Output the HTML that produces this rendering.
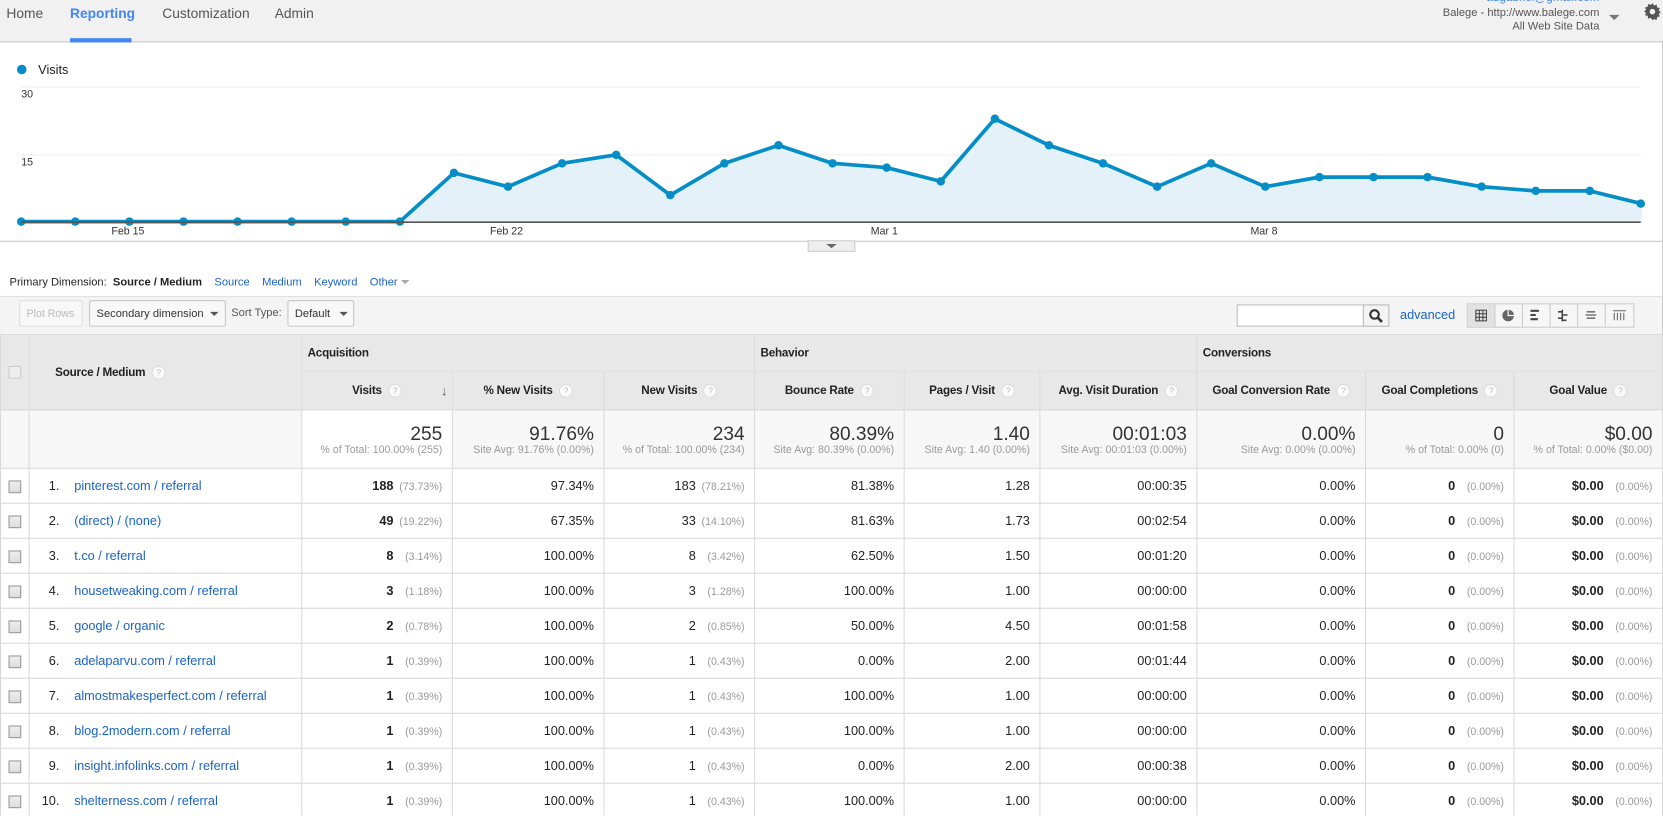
<!DOCTYPE html>
<html><head><meta charset="utf-8"><style>
html,body{margin:0;padding:0;width:1663px;height:815px;overflow:hidden;background:#fff;font-family:"Liberation Sans",Arial,sans-serif}
#w{position:absolute;left:0;top:0;width:1568px;height:769px;transform:scale(1.0606);transform-origin:0 0;overflow:hidden}
.a{position:absolute}
.nav{left:0;top:0;width:1568px;height:39px;background:#f1f1f1;border-bottom:1px solid #c8c8c8}
.tab{top:5px;font-size:13px;color:#555}
.blue{color:#1a63c6}
table{position:absolute;left:0;top:315px;border-collapse:collapse;table-layout:fixed;width:1567px;font-size:12px}
td,th{border:1px solid #d9d9d9;padding:0 8px;white-space:nowrap;overflow:hidden}
th{background:#e8e8e8;font-size:11px;color:#222;font-weight:bold;letter-spacing:-0.2px}
.h1 th{height:34px;text-align:left;padding-left:5px;vertical-align:middle}
.h2 th{height:35px;text-align:center}
.q{display:inline-block;width:11px;height:11px;border-radius:50%;border:1px solid #ddd;background:#fafafa;color:#bbb;font-size:8px;line-height:11px;text-align:center;vertical-align:middle;margin-left:6px;font-weight:normal}
.sum td{background:#f7f7f7;height:54px;text-align:right;vertical-align:middle;padding-right:9px}
.sum td.s{background:#fff}
.big{font-size:18px;color:#333;line-height:20px}
.sm{font-size:10px;color:#999}
.r td{height:32px;text-align:right;color:#222;padding-right:9px}
.r td.l{text-align:left;padding-left:8px}
.r td.c{padding:0;text-align:center}
.g{font-size:10px;color:#999;display:inline-block;width:46px;text-align:right}
.cb{display:inline-block;width:10px;height:10px;border:1px solid #999;background:linear-gradient(#eee,#ddd);vertical-align:middle}
.num{display:inline-block;width:20px;text-align:right;margin-right:14px}
.lnk{color:#1a63c6}
.btn{top:283px;height:25px;border:1px solid #c6c6c6;border-radius:2px;background:#f8f8f8;font-size:11px;color:#333;line-height:25px;box-sizing:border-box;padding:0 6px;white-space:nowrap;overflow:hidden}
.tri{display:inline-block;width:0;height:0;border-left:4px solid transparent;border-right:4px solid transparent;border-top:4px solid #555;vertical-align:middle}
</style></head><body><div id="w">
<div class="a nav"></div>
<div class="a tab" style="left:6px">Home</div>
<div class="a tab" style="left:66px;color:#4285f4;font-weight:bold">Reporting</div>
<div class="a" style="left:66px;top:36px;width:58px;height:4px;background:#4285f4"></div>
<div class="a tab" style="left:153px">Customization</div>
<div class="a tab" style="left:259px">Admin</div>
<div class="a" style="right:60px;top:-8px;font-size:11px;color:#4285f4;text-align:right">adgabriel@gmail.com</div>
<div class="a" style="right:60px;top:6px;font-size:10.5px;color:#555;text-align:right">Balege - http://www.balege.com</div>
<div class="a" style="right:60px;top:19px;font-size:10.5px;color:#555;text-align:right">All Web Site Data</div>
<div class="a" style="left:1517px;top:8px"><span class="tri" style="border-top-color:#777;border-left-width:5px;border-right-width:5px;border-top-width:5px"></span></div>
<svg class="a" style="left:1550px;top:3px" width="16" height="16" viewBox="0 0 16 16"><path d="M8 0l1.5 2.2 2.6-.8.3 2.6 2.6.6-1 2.4 2 1.6-2 1.6 1 2.4-2.6.6-.3 2.6-2.6-.8L8 16l-1.5-2.2-2.6.8-.3-2.6-2.6-.6 1-2.4L0 8l2-1.6-1-2.4 2.6-.6.3-2.6 2.6.8z" fill="#555"/><circle cx="8" cy="8" r="2.6" fill="#f1f1f1"/></svg>
<div class="a" style="left:1567px;top:40px;width:1px;height:275px;background:#ccc"></div>

<div class="a" style="left:16px;top:61px;width:9px;height:9px;border-radius:50%;background:#058dc7"></div>
<div class="a" style="left:36px;top:59px;font-size:12px;color:#222">Visits</div>
<div class="a" style="left:20px;top:84px;font-size:10px;color:#333">30</div>
<div class="a" style="left:20px;top:148px;font-size:10px;color:#333">15</div>
<svg class="a" style="left:0;top:0" width="1568" height="240">
<line x1="20" y1="82" x2="1547" y2="82" stroke="#eee"/>
<line x1="20" y1="146" x2="1547" y2="146" stroke="#eee"/>
<polygon fill="#e4f1f9" points="20,209 20,209 71,209 122,209 173,209 224,209 275,209 326,209 377,209 428,163 479,176 530,154 581,146 632,184 683,154 734,137 785,154 836,158 887,171 938,112 989,137 1040,154 1091,176 1142,154 1193,176 1244,167 1295,167 1346,167 1397,176 1448,180 1499,180 1548,192 1548,209"/>
<polyline fill="none" stroke="#058dc7" stroke-width="3.5" stroke-linejoin="round" points="20,209 71,209 122,209 173,209 224,209 275,209 326,209 377,209 428,163 479,176 530,154 581,146 632,184 683,154 734,137 785,154 836,158 887,171 938,112 989,137 1040,154 1091,176 1142,154 1193,176 1244,167 1295,167 1346,167 1397,176 1448,180 1499,180 1548,192"/>
<g fill="#058dc7">
<circle cx="20" cy="209" r="4"/><circle cx="71" cy="209" r="4"/><circle cx="122" cy="209" r="4"/><circle cx="173" cy="209" r="4"/><circle cx="224" cy="209" r="4"/><circle cx="275" cy="209" r="4"/><circle cx="326" cy="209" r="4"/><circle cx="377" cy="209" r="4"/><circle cx="428" cy="163" r="4"/><circle cx="479" cy="176" r="4"/><circle cx="530" cy="154" r="4"/><circle cx="581" cy="146" r="4"/><circle cx="632" cy="184" r="4"/><circle cx="683" cy="154" r="4"/><circle cx="734" cy="137" r="4"/><circle cx="785" cy="154" r="4"/><circle cx="836" cy="158" r="4"/><circle cx="887" cy="171" r="4"/><circle cx="938" cy="112" r="4"/><circle cx="989" cy="137" r="4"/><circle cx="1040" cy="154" r="4"/><circle cx="1091" cy="176" r="4"/><circle cx="1142" cy="154" r="4"/><circle cx="1193" cy="176" r="4"/><circle cx="1244" cy="167" r="4"/><circle cx="1295" cy="167" r="4"/><circle cx="1346" cy="167" r="4"/><circle cx="1397" cy="176" r="4"/><circle cx="1448" cy="180" r="4"/><circle cx="1499" cy="180" r="4"/><circle cx="1547" cy="192" r="4"/></g>
<line x1="20" y1="209.5" x2="1547" y2="209.5" stroke="#555" stroke-width="1.5"/>
<line x1="0" y1="227.5" x2="1567" y2="227.5" stroke="#ccc"/>
<rect x="762" y="227" width="44" height="10" fill="#eee" stroke="#ccc"/>
<polygon points="779,230 789,230 784,234" fill="#666"/>
</svg>
<div class="a" style="left:105px;top:213px;font-size:10px;color:#333">Feb 15</div>
<div class="a" style="left:462px;top:213px;font-size:10px;color:#333">Feb 22</div>
<div class="a" style="left:821px;top:213px;font-size:10px;color:#333">Mar 1</div>
<div class="a" style="left:1179px;top:213px;font-size:10px;color:#333">Mar 8</div>

<div class="a" style="left:9px;top:260px;font-size:10.5px;color:#222;white-space:nowrap">Primary Dimension:&nbsp; <span style="font-weight:bold;color:#222;">Source / Medium</span> &nbsp;&nbsp;&nbsp;<span class="blue">Source</span> &nbsp;&nbsp;&nbsp;<span class="blue">Medium</span> &nbsp;&nbsp;&nbsp;<span class="blue">Keyword</span> &nbsp;&nbsp;&nbsp;<span class="blue">Other</span> <span class="tri" style="border-top-color:#aaa"></span></div>
<div class="a" style="left:0;top:279px;width:1567px;height:36px;background:#f4f4f4;border-top:1px solid #e0e0e0"></div>
<div class="a btn" style="left:18px;width:60px;color:#bbb;border-color:#ddd;font-size:10px">Plot Rows</div>
<div class="a btn" style="left:84px;width:129px;font-size:10.5px">Secondary dimension &nbsp;<span class="tri"></span></div>
<div class="a" style="left:218px;top:283px;font-size:10.5px;color:#555;line-height:25px">Sort Type:</div>
<div class="a btn" style="left:271px;width:63px;font-size:10.5px">Default &nbsp;&nbsp;<span class="tri"></span></div>
<div class="a" style="left:1166px;top:287px;width:143px;height:21px;border:1px solid #bbb;background:#fff;box-sizing:border-box"></div>
<div class="a" style="left:1285px;top:287px;width:25px;height:21px;border:1px solid #bbb;background:#f4f4f4;box-sizing:border-box"><svg width="23" height="19"><circle cx="10" cy="8.5" r="4" fill="none" stroke="#333" stroke-width="2"/><line x1="13" y1="11.5" x2="17" y2="15.5" stroke="#333" stroke-width="2.5"/></svg></div>
<div class="a" style="left:1320px;top:290px;font-size:12px;color:#1a63c6">advanced</div>
<div class="a" style="left:1383px;top:286px;width:158px;height:23px;border:1px solid #ccc;background:#f6f6f6;box-sizing:border-box"></div>
<div class="a" style="left:1384px;top:287px;width:26px;height:21px;background:#e2e2e2"></div>
<svg class="a" style="left:1383px;top:286px" width="160" height="24" fill="none" stroke="#444">
<line x1="26.5" y1="1" x2="26.5" y2="22" stroke="#ccc"/><line x1="52.5" y1="1" x2="52.5" y2="22" stroke="#ccc"/><line x1="78.5" y1="1" x2="78.5" y2="22" stroke="#ccc"/><line x1="104.5" y1="1" x2="104.5" y2="22" stroke="#ccc"/><line x1="130.5" y1="1" x2="130.5" y2="22" stroke="#ccc"/>
<rect x="8.5" y="6.5" width="10" height="10"/><path d="M8.5 9.8h10M8.5 13.2h10M11.8 6.5v10M15.2 6.5v10"/>
<circle cx="39" cy="11.5" r="5.5" fill="#666" stroke="none"/><path d="M39 6v5.5h5.5" stroke="#f6f6f6" stroke-width="1.2"/>
<path d="M60 7h8M60 11h5M60 15h7" stroke-width="2"/>
<path d="M90 6v11M86 8h4M90 11h5M86 14h4M90 16h4" stroke-width="1.5"/>
<path d="M113 8h8M112 11h10M113 14h8" stroke-width="1.5" stroke="#777"/>
<path d="M138 7h12M139 9v7M142 9v7M145 9v7M148 9v7" stroke="#666"/>
</svg>

<table>
<colgroup><col style="width:27px"><col style="width:257px"><col style="width:142px"><col style="width:143px"><col style="width:142px"><col style="width:141px"><col style="width:128px"><col style="width:148px"><col style="width:159px"><col style="width:140px"><col style="width:140px"></colgroup>
<tr class="h1"><th rowspan="2" style="padding:0;text-align:center"><span class="cb" style="border-color:#ccc;background:#eee"></span></th><th rowspan="2" style="text-align:left;padding-left:24px">Source / Medium<span class="q">?</span></th><th colspan="3">Acquisition</th><th colspan="3">Behavior</th><th colspan="3">Conversions</th></tr>
<tr class="h2"><th style="position:relative">Visits<span class="q">?</span><span style="position:absolute;right:4px;top:10px;font-size:13px;color:#666">&#8595;</span></th><th>% New Visits<span class="q">?</span></th><th>New Visits<span class="q">?</span></th><th>Bounce Rate<span class="q">?</span></th><th>Pages / Visit<span class="q">?</span></th><th>Avg. Visit Duration<span class="q">?</span></th><th>Goal Conversion Rate<span class="q">?</span></th><th>Goal Completions<span class="q">?</span></th><th>Goal Value<span class="q">?</span></th></tr>
<tr class="sum"><td></td><td></td>
<td class="s"><div class="big">255</div><div class="sm">% of Total: 100.00% (255)</div></td>
<td><div class="big">91.76%</div><div class="sm">Site Avg: 91.76% (0.00%)</div></td>
<td><div class="big">234</div><div class="sm">% of Total: 100.00% (234)</div></td>
<td><div class="big">80.39%</div><div class="sm">Site Avg: 80.39% (0.00%)</div></td>
<td><div class="big">1.40</div><div class="sm">Site Avg: 1.40 (0.00%)</div></td>
<td><div class="big">00:01:03</div><div class="sm">Site Avg: 00:01:03 (0.00%)</div></td>
<td><div class="big">0.00%</div><div class="sm">Site Avg: 0.00% (0.00%)</div></td>
<td><div class="big">0</div><div class="sm">% of Total: 0.00% (0)</div></td>
<td><div class="big">$0.00</div><div class="sm">% of Total: 0.00% ($0.00)</div></td></tr>
<tr class="r"><td class="c"><span class="cb"></span></td><td class="l"><span class="num">1.</span><span class="lnk">pinterest.com / referral</span></td><td><b>188</b><span class="g">(73.73%)</span></td><td>97.34%</td><td>183<span class="g">(78.21%)</span></td><td>81.38%</td><td>1.28</td><td>00:00:35</td><td>0.00%</td><td><b>0</b><span class="g">(0.00%)</span></td><td><b>$0.00</b><span class="g">(0.00%)</span></td></tr>
<tr class="r"><td class="c"><span class="cb"></span></td><td class="l"><span class="num">2.</span><span class="lnk">(direct) / (none)</span></td><td><b>49</b><span class="g">(19.22%)</span></td><td>67.35%</td><td>33<span class="g">(14.10%)</span></td><td>81.63%</td><td>1.73</td><td>00:02:54</td><td>0.00%</td><td><b>0</b><span class="g">(0.00%)</span></td><td><b>$0.00</b><span class="g">(0.00%)</span></td></tr>
<tr class="r"><td class="c"><span class="cb"></span></td><td class="l"><span class="num">3.</span><span class="lnk">t.co / referral</span></td><td><b>8</b><span class="g">(3.14%)</span></td><td>100.00%</td><td>8<span class="g">(3.42%)</span></td><td>62.50%</td><td>1.50</td><td>00:01:20</td><td>0.00%</td><td><b>0</b><span class="g">(0.00%)</span></td><td><b>$0.00</b><span class="g">(0.00%)</span></td></tr>
<tr class="r"><td class="c"><span class="cb"></span></td><td class="l"><span class="num">4.</span><span class="lnk">housetweaking.com / referral</span></td><td><b>3</b><span class="g">(1.18%)</span></td><td>100.00%</td><td>3<span class="g">(1.28%)</span></td><td>100.00%</td><td>1.00</td><td>00:00:00</td><td>0.00%</td><td><b>0</b><span class="g">(0.00%)</span></td><td><b>$0.00</b><span class="g">(0.00%)</span></td></tr>
<tr class="r"><td class="c"><span class="cb"></span></td><td class="l"><span class="num">5.</span><span class="lnk">google / organic</span></td><td><b>2</b><span class="g">(0.78%)</span></td><td>100.00%</td><td>2<span class="g">(0.85%)</span></td><td>50.00%</td><td>4.50</td><td>00:01:58</td><td>0.00%</td><td><b>0</b><span class="g">(0.00%)</span></td><td><b>$0.00</b><span class="g">(0.00%)</span></td></tr>
<tr class="r"><td class="c"><span class="cb"></span></td><td class="l"><span class="num">6.</span><span class="lnk">adelaparvu.com / referral</span></td><td><b>1</b><span class="g">(0.39%)</span></td><td>100.00%</td><td>1<span class="g">(0.43%)</span></td><td>0.00%</td><td>2.00</td><td>00:01:44</td><td>0.00%</td><td><b>0</b><span class="g">(0.00%)</span></td><td><b>$0.00</b><span class="g">(0.00%)</span></td></tr>
<tr class="r"><td class="c"><span class="cb"></span></td><td class="l"><span class="num">7.</span><span class="lnk">almostmakesperfect.com / referral</span></td><td><b>1</b><span class="g">(0.39%)</span></td><td>100.00%</td><td>1<span class="g">(0.43%)</span></td><td>100.00%</td><td>1.00</td><td>00:00:00</td><td>0.00%</td><td><b>0</b><span class="g">(0.00%)</span></td><td><b>$0.00</b><span class="g">(0.00%)</span></td></tr>
<tr class="r"><td class="c"><span class="cb"></span></td><td class="l"><span class="num">8.</span><span class="lnk">blog.2modern.com / referral</span></td><td><b>1</b><span class="g">(0.39%)</span></td><td>100.00%</td><td>1<span class="g">(0.43%)</span></td><td>100.00%</td><td>1.00</td><td>00:00:00</td><td>0.00%</td><td><b>0</b><span class="g">(0.00%)</span></td><td><b>$0.00</b><span class="g">(0.00%)</span></td></tr>
<tr class="r"><td class="c"><span class="cb"></span></td><td class="l"><span class="num">9.</span><span class="lnk">insight.infolinks.com / referral</span></td><td><b>1</b><span class="g">(0.39%)</span></td><td>100.00%</td><td>1<span class="g">(0.43%)</span></td><td>0.00%</td><td>2.00</td><td>00:00:38</td><td>0.00%</td><td><b>0</b><span class="g">(0.00%)</span></td><td><b>$0.00</b><span class="g">(0.00%)</span></td></tr>
<tr class="r"><td class="c"><span class="cb"></span></td><td class="l"><span class="num">10.</span><span class="lnk">shelterness.com / referral</span></td><td><b>1</b><span class="g">(0.39%)</span></td><td>100.00%</td><td>1<span class="g">(0.43%)</span></td><td>100.00%</td><td>1.00</td><td>00:00:00</td><td>0.00%</td><td><b>0</b><span class="g">(0.00%)</span></td><td><b>$0.00</b><span class="g">(0.00%)</span></td></tr>
</table>
</div></body></html>
